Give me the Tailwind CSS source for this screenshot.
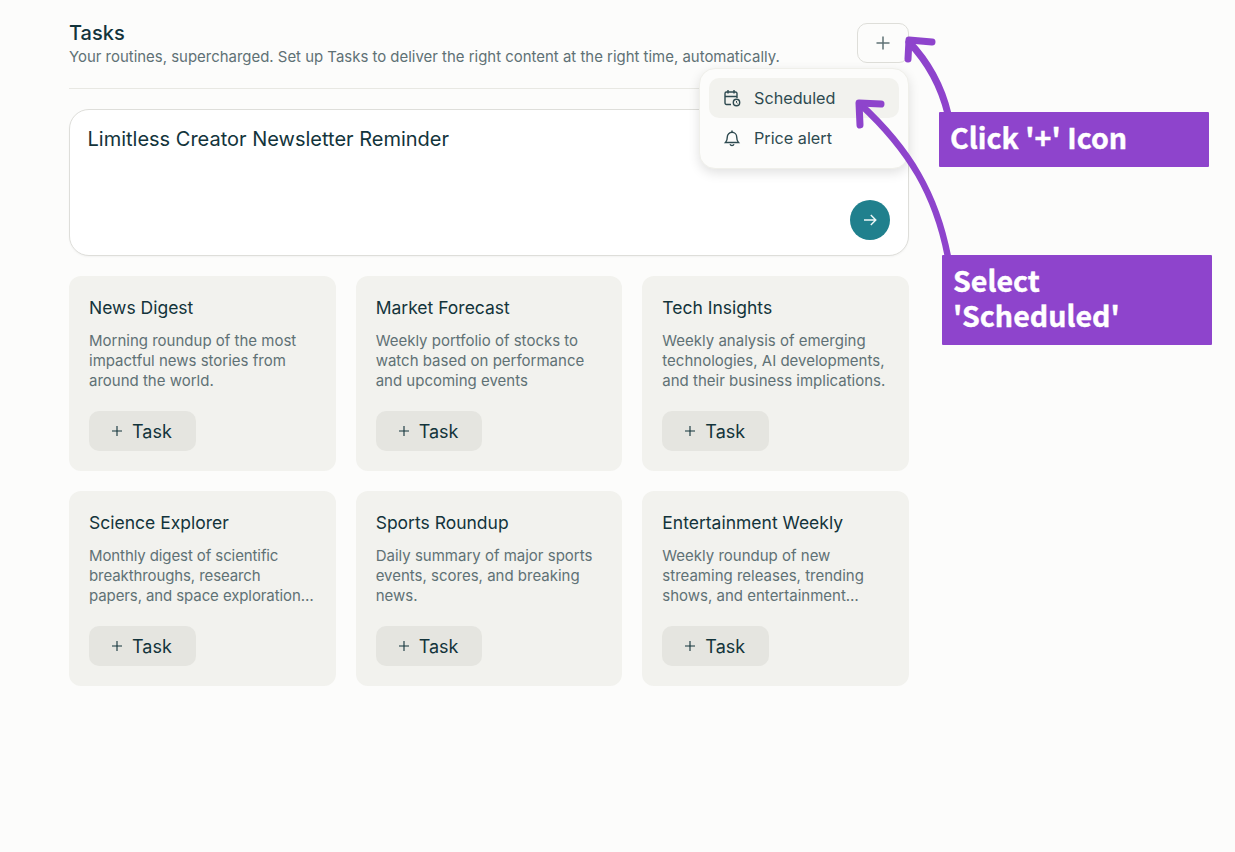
<!DOCTYPE html>
<html>
  <head>
    <meta charset="utf-8">
    <script src="https://cdn.jsdelivr.net/npm/@tailwindcss/browser@4"></script>
  </head>

  <body class="relative h-[852px] w-[1235px] overflow-hidden bg-[#fcfcfb] font-['Inter',sans-serif] text-[#13343b]">

    <main class="ml-[69px] w-[840px] pt-[21px]">
      <header class="relative flex items-start justify-between border-b border-[#e8e8e3] h-[68px]">
        <div>
          <h1 class="text-[20px] leading-[24px] font-medium">Tasks</h1>
          <p class="mt-[2px] text-[14.94px] leading-[20px] text-[#5f7175]">Your routines, supercharged. Set up Tasks to deliver the right content at the right time, automatically.</p>
        </div>
        <button class="mt-[2px] flex h-[40px] w-[52px] items-center justify-center rounded-[10px] border border-[#deded9] bg-[#fcfcfb] text-[#5f7175]">
          <svg class="h-4 w-4" viewBox="0 0 16 16" fill="none" stroke="currentColor" stroke-width="1.5"><path d="M8 1.5v13M1.5 8h13"/></svg>
        </button>

        <div class="absolute right-0 top-[47px] z-10 w-[210px] rounded-[16px] border border-[#efefea] bg-[#fcfcfb] px-[9px] pt-[9px] pb-[10px] shadow-[0_4px_12px_rgba(0,0,0,0.12)]">
          <div class="flex h-[40px] items-center gap-[13px] rounded-[10px] bg-[#f2f2ee] px-[14px] text-[16.2px] text-[#2e4a50]">
            <svg class="h-[18px] w-[18px]" viewBox="0 0 18 18" fill="none" stroke="#2e4a50" stroke-width="1.4"><path d="M8 15.5H3.5a1.5 1.5 0 0 1-1.5-1.5V4.5A1.5 1.5 0 0 1 3.5 3h9A1.5 1.5 0 0 1 14 4.5V9"/><path d="M5 1v3.5M11 1v3.5M2 7.5h12"/><circle cx="13.5" cy="13.5" r="3.2"/><path d="M13.5 12v1.6l1 .7" stroke-width="1"/></svg>
            <span>Scheduled</span>
          </div>
          <div class="flex h-[40px] items-center gap-[13px] px-[14px] text-[16.2px] text-[#2e4a50]">
            <svg class="h-[18px] w-[18px]" viewBox="0 0 18 18" fill="none" stroke="#2e4a50" stroke-width="1.4"><path d="M2.5 13.5c1-1 1.8-2 1.8-5.5a4.7 4.7 0 0 1 9.4 0c0 3.5.8 4.5 1.8 5.5z"/><path d="M9 1.5v1.8M7 15.2a2.2 2.2 0 0 0 4 0"/></svg>
            <span>Price alert</span>
          </div>
        </div>
      </header>

      <section class="relative mt-[20px] h-[147px] rounded-[20px] border border-[#dededa] bg-white px-[17.5px] pt-[15px] shadow-[0_1px_2px_rgba(0,0,0,0.04)]">
        <p class="text-[20px] leading-[28px] text-[#13343b]">Limitless Creator Newsletter Reminder</p>
        <button class="absolute bottom-[15px] right-[18px] flex h-[40px] w-[40px] items-center justify-center rounded-full bg-[#20808d]">
          <svg class="h-4 w-4" viewBox="0 0 16 16" fill="none" stroke="#eef7f7" stroke-width="1.4"><path d="M2 8h12M8.8 3l5 5-5 5"/></svg>
        </button>
      </section>

      <section class="mt-[20px] grid grid-cols-3 gap-[20px]">
        <article class="h-[195px] rounded-[12px] bg-[#f2f2ee] px-[20px] pt-[20px]">
          <h2 class="text-[17.5px] leading-[24px] text-[#13343b]">News Digest</h2>
          <p class="mt-[11px] h-[60px] text-[15px] leading-[20px] text-[#5f7175]">Morning roundup of the most impactful news stories from around the world.</p>
          <button class="mt-[20px] flex h-[40px] w-[106.5px] items-center gap-[10px] rounded-[10px] bg-[#e5e5e0] pl-[23px] text-[18px]">
            <svg class="h-[10px] w-[10px]" viewBox="0 0 10 10" fill="none" stroke="currentColor" stroke-width="1.1"><path d="M5 0v10M0 5h10"/></svg>Task
          </button>
        </article>
        <article class="h-[195px] rounded-[12px] bg-[#f2f2ee] px-[20px] pt-[20px]">
          <h2 class="text-[17.5px] leading-[24px] text-[#13343b]">Market Forecast</h2>
          <p class="mt-[11px] h-[60px] text-[15px] leading-[20px] text-[#5f7175]">Weekly portfolio of stocks to watch based on performance and upcoming events</p>
          <button class="mt-[20px] flex h-[40px] w-[106.5px] items-center gap-[10px] rounded-[10px] bg-[#e5e5e0] pl-[23px] text-[18px]">
            <svg class="h-[10px] w-[10px]" viewBox="0 0 10 10" fill="none" stroke="currentColor" stroke-width="1.1"><path d="M5 0v10M0 5h10"/></svg>Task
          </button>
        </article>
        <article class="h-[195px] rounded-[12px] bg-[#f2f2ee] px-[20px] pt-[20px]">
          <h2 class="text-[17.5px] leading-[24px] text-[#13343b]">Tech Insights</h2>
          <p class="mt-[11px] h-[60px] text-[15px] leading-[20px] text-[#5f7175]">Weekly analysis of emerging technologies, AI developments, and their business implications.</p>
          <button class="mt-[20px] flex h-[40px] w-[106.5px] items-center gap-[10px] rounded-[10px] bg-[#e5e5e0] pl-[23px] text-[18px]">
            <svg class="h-[10px] w-[10px]" viewBox="0 0 10 10" fill="none" stroke="currentColor" stroke-width="1.1"><path d="M5 0v10M0 5h10"/></svg>Task
          </button>
        </article>
        <article class="h-[195px] rounded-[12px] bg-[#f2f2ee] px-[20px] pt-[20px]">
          <h2 class="text-[17.5px] leading-[24px] text-[#13343b]">Science Explorer</h2>
          <p class="mt-[11px] h-[60px] whitespace-nowrap text-[15px] leading-[20px] tracking-[-0.1px] text-[#5f7175]">Monthly digest of scientific<br>breakthroughs, research<br>papers, and space exploration…</p>
          <button class="mt-[20px] flex h-[40px] w-[106.5px] items-center gap-[10px] rounded-[10px] bg-[#e5e5e0] pl-[23px] text-[18px]">
            <svg class="h-[10px] w-[10px]" viewBox="0 0 10 10" fill="none" stroke="currentColor" stroke-width="1.1"><path d="M5 0v10M0 5h10"/></svg>Task
          </button>
        </article>
        <article class="h-[195px] rounded-[12px] bg-[#f2f2ee] px-[20px] pt-[20px]">
          <h2 class="text-[17.5px] leading-[24px] text-[#13343b]">Sports Roundup</h2>
          <p class="mt-[11px] h-[60px] text-[15px] leading-[20px] text-[#5f7175]">Daily summary of major sports events, scores, and breaking news.</p>
          <button class="mt-[20px] flex h-[40px] w-[106.5px] items-center gap-[10px] rounded-[10px] bg-[#e5e5e0] pl-[23px] text-[18px]">
            <svg class="h-[10px] w-[10px]" viewBox="0 0 10 10" fill="none" stroke="currentColor" stroke-width="1.1"><path d="M5 0v10M0 5h10"/></svg>Task
          </button>
        </article>
        <article class="h-[195px] rounded-[12px] bg-[#f2f2ee] px-[20px] pt-[20px]">
          <h2 class="text-[17.5px] leading-[24px] text-[#13343b]">Entertainment Weekly</h2>
          <p class="mt-[11px] h-[60px] text-[15px] leading-[20px] text-[#5f7175]">Weekly roundup of new streaming releases, trending shows, and entertainment…</p>
          <button class="mt-[20px] flex h-[40px] w-[106.5px] items-center gap-[10px] rounded-[10px] bg-[#e5e5e0] pl-[23px] text-[18px]">
            <svg class="h-[10px] w-[10px]" viewBox="0 0 10 10" fill="none" stroke="currentColor" stroke-width="1.1"><path d="M5 0v10M0 5h10"/></svg>Task
          </button>
        </article>
      </section>
    </main>

    <!-- annotations on top of the screenshot -->
    <svg class="absolute left-0 top-0 z-20 pointer-events-none" width="1235" height="852" fill="none" stroke="#8e44cc" stroke-linecap="round" stroke-linejoin="round">
      <path d="M948 114C941 85 928 62 909 42" stroke-width="7"/>
      <path d="M932 42L909 40L908 59" stroke-width="7"/>
      <path d="M948 257C936 195 910 150 860 104" stroke-width="6.5"/>
      <path d="M881 104L859 103L860 125" stroke-width="7"/>
    </svg>
    <div class="absolute left-[939px] top-[112px] z-20 flex h-[55px] w-[270px] items-center rounded-[1px] bg-[#8e44cc] pb-[5px] pl-[11px] font-['Noto_Sans_CJK_SC',sans-serif] text-[28.6px] font-bold text-white [-webkit-text-stroke:0.4px_white]">Click '+' Icon</div>
    <div class="absolute left-[942px] top-[255px] z-20 flex h-[90px] w-[270px] items-center rounded-[1px] bg-[#8e44cc] pb-[7px] pl-[11px] font-['Noto_Sans_CJK_SC',sans-serif] text-[28.6px] leading-[35px] font-bold text-white [-webkit-text-stroke:0.4px_white]">Select<br>'Scheduled'</div>

  </body>
</html>
